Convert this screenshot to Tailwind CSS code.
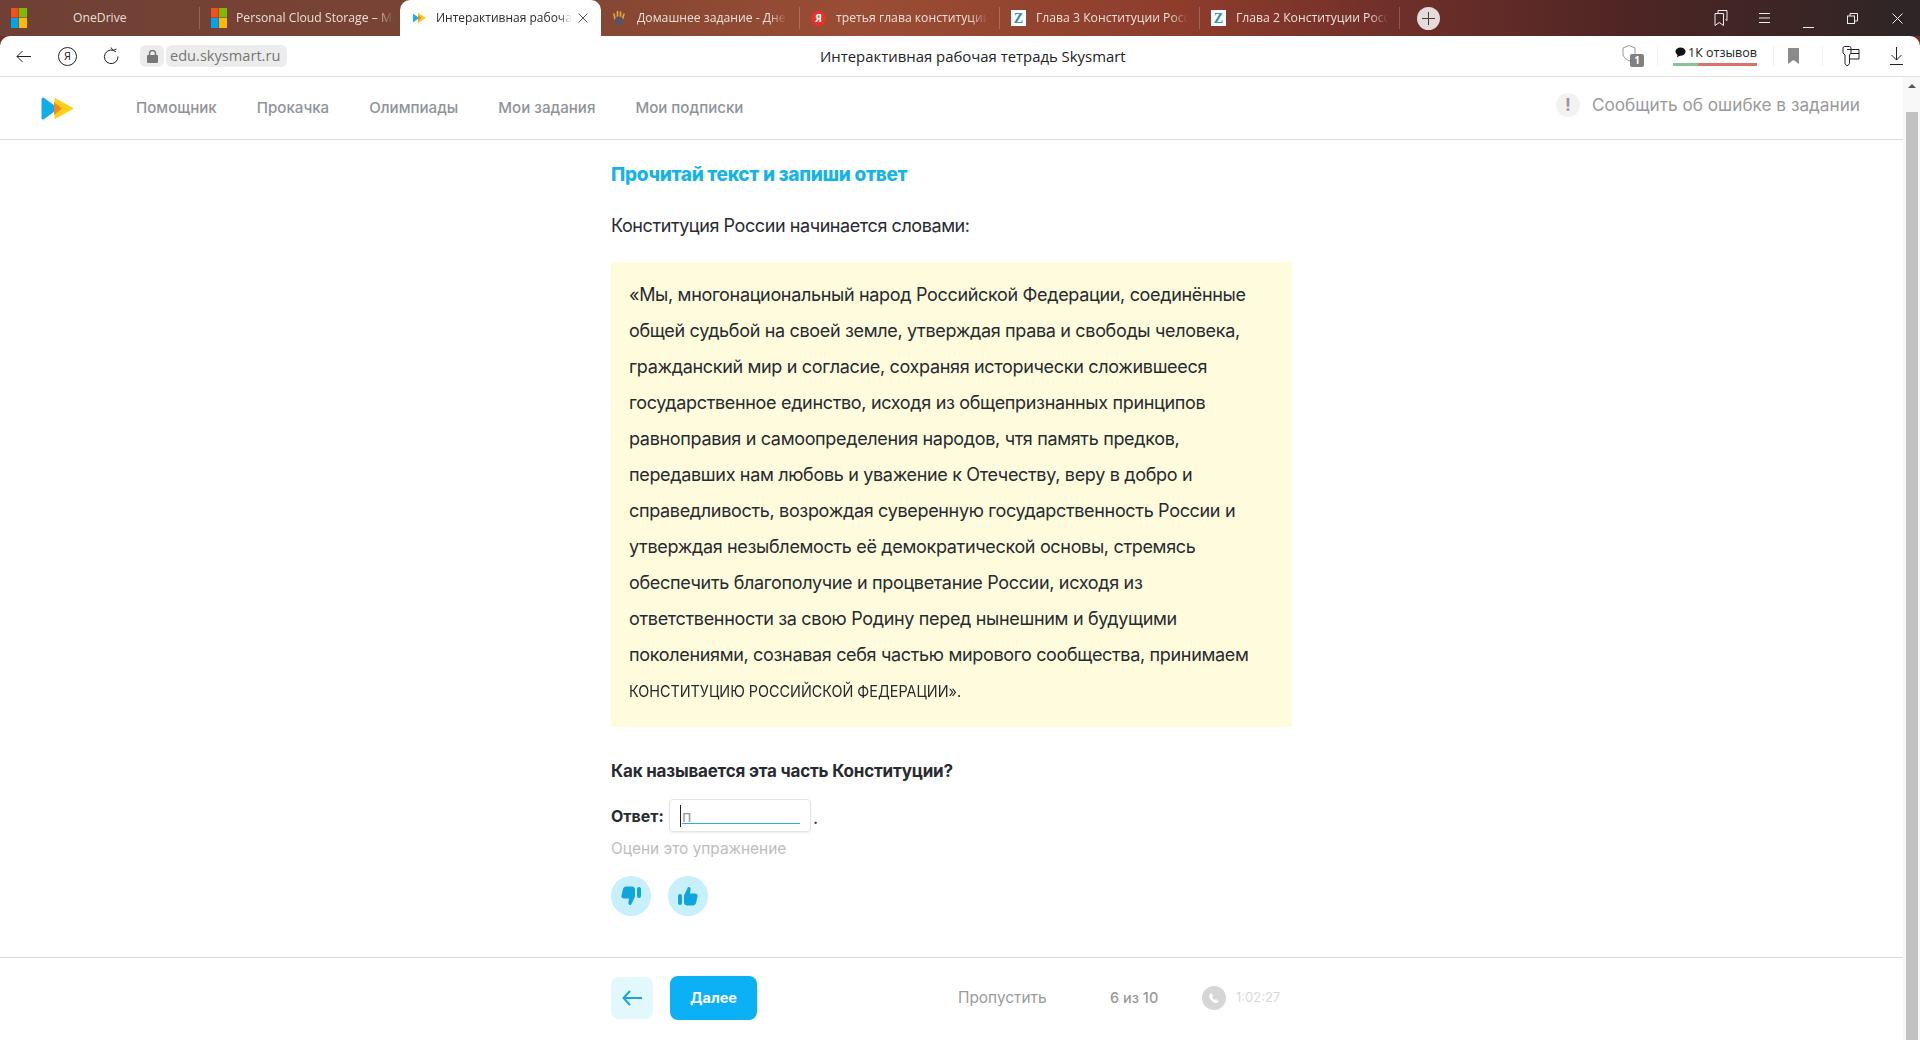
<!DOCTYPE html>
<html lang="ru">
<head>
  <meta charset="UTF-8" />
  <title>Интерактивная рабочая тетрадь Skysmart</title>
  <script src="https://cdn.jsdelivr.net/npm/@tailwindcss/browser@4"></script>
</head>
<body class="bg-white font-['Inter','Noto_Sans',sans-serif] text-[#272b30] h-[1040px] w-[1920px] overflow-hidden flex flex-col">

  <!-- Tab strip -->
  <div class="h-9 shrink-0 flex items-stretch font-['Open_Sans',sans-serif] text-[12.2px] text-[#eadfd9] bg-[linear-gradient(90deg,#6f4035_0%,#7b4434_25%,#9a4d34_45%,#8d3c2c_62%,#71302a_72%,#4e2524_85%,#2d2526_100%)]">
    <div class="w-[200px] flex items-center pl-[11px] border-r border-white/20 my-[7px]">
      <svg class="w-4 h-5" viewBox="0 0 16 20"><rect y="0" width="7.5" height="9.5" fill="#f25022"/><rect x="8" y="0" width="8" height="9.5" fill="#7fba00"/><rect y="10" width="7.5" height="10" fill="#00a4ef"/><rect x="8" y="10" width="8" height="10" fill="#ffb900"/></svg>
      <span class="ml-[46px]">OneDrive</span>
    </div>
    <div class="w-[200px] flex items-center pl-[11px] my-[7px]">
      <svg class="w-4 h-5 shrink-0" viewBox="0 0 16 20"><rect y="0" width="7.5" height="9.5" fill="#f25022"/><rect x="8" y="0" width="8" height="9.5" fill="#7fba00"/><rect y="10" width="7.5" height="10" fill="#00a4ef"/><rect x="8" y="10" width="8" height="10" fill="#ffb900"/></svg>
      <span class="ml-[9px] whitespace-nowrap overflow-hidden w-[158px] [mask-image:linear-gradient(90deg,#000_88%,transparent)]">Personal Cloud Storage – Microsoft</span>
    </div>
    <div class="w-[201px] flex items-center pl-[13px] bg-white text-[#2b2b2b] text-[12px] rounded-t-[10px] relative">
      <svg class="w-[14px] h-3 shrink-0" viewBox="0 0 14 12"><path d="M0 1.500 6 6 0 10.500Z" fill="#1eaee8"/><path d="M5 1 13 6 5 11Z" fill="#fdc91a"/><path d="M5 3 8.500 6 5 9Z" fill="#f58a20"/></svg>
      <span class="ml-[9px] whitespace-nowrap overflow-hidden w-[136px] [mask-image:linear-gradient(90deg,#000_90%,transparent)]">Интерактивная рабочая тетрадь</span>
      <svg class="w-[10px] h-[10px] ml-[6px]" viewBox="0 0 10 10" stroke="#555" fill="none"><path d="M.5.5l9 9M9.500.5l-9 9"/></svg>
    </div>
    <div class="w-[199px] flex items-center pl-[11px] border-r border-white/20 my-[7px]">
      <svg class="w-[14px] h-4 shrink-0" viewBox="0 0 14 16" fill="none"><path d="M3 9 2 4M5.500 8V1.500M8.500 8V2M10.500 9 12 4" stroke="#e0a63a" stroke-width="1.700" stroke-linecap="round"/><circle cx="7" cy="11" r="4.500" fill="#5d5263"/></svg>
      <span class="ml-[11px] whitespace-nowrap overflow-hidden w-[150px] [mask-image:linear-gradient(90deg,#000_88%,transparent)]">Домашнее задание - Дневник</span>
    </div>
    <div class="w-[200px] flex items-center pl-[11px] border-r border-white/20 my-[7px]">
      <span class="w-[15px] h-[15px] shrink-0 rounded-full bg-[#e8312a] text-white text-[10px] font-bold flex items-center justify-center">Я</span>
      <span class="ml-[10px] whitespace-nowrap overflow-hidden w-[152px] [mask-image:linear-gradient(90deg,#000_88%,transparent)]">третья глава конституции рф</span>
    </div>
    <div class="w-[200px] flex items-center pl-[11px] border-r border-white/20 my-[7px]">
      <span class="w-[15px] h-[16px] shrink-0 bg-white text-[#2b8fb5] text-[14px] font-bold flex items-center justify-center font-['Liberation_Serif',serif]">Z</span>
      <span class="ml-[10px] whitespace-nowrap overflow-hidden w-[152px] [mask-image:linear-gradient(90deg,#000_88%,transparent)]">Глава 3 Конституции России</span>
    </div>
    <div class="w-[200px] flex items-center pl-[11px] border-r border-white/20 my-[7px]">
      <span class="w-[15px] h-[16px] shrink-0 bg-white text-[#2b8fb5] text-[14px] font-bold flex items-center justify-center font-['Liberation_Serif',serif]">Z</span>
      <span class="ml-[10px] whitespace-nowrap overflow-hidden w-[152px] [mask-image:linear-gradient(90deg,#000_88%,transparent)]">Глава 2 Конституции России</span>
    </div>
    <div class="flex items-center pl-[17px]">
      <span class="w-[23px] h-[23px] rounded-full bg-[#e4dbda] flex items-center justify-center">
        <svg class="w-[13px] h-[13px]" viewBox="0 0 13 13" stroke="#4a3a38" fill="none"><path d="M6.500 0v13M0 6.500h13"/></svg>
      </span>
    </div>
    <div class="ml-auto flex items-center text-white">
      <svg class="w-[14px] h-4 mr-[30px]" viewBox="0 0 14 16" fill="none" stroke="#eee"><path d="M4 3V.5h9v10l-1.500-1"/><path d="M1 3.500h8.500v12L5.250 12.500 1 15.500Z"/></svg>
      <svg class="w-[13px] h-[10px] mr-[32px]" viewBox="0 0 13 10" stroke="#eee"><path d="M1 .5h11M1 5h11M1 9.500h11"/></svg>
      <svg class="w-[11px] h-[11px] mr-[33px] mt-[9px]" viewBox="0 0 11 11" stroke="#eee"><path d="M0 10.500h11"/></svg>
      <svg class="w-[11px] h-[11px] mr-[34px]" viewBox="0 0 11 11" stroke="#eee" fill="none"><rect x=".5" y="3" width="7" height="7.500"/><path d="M3 3V.5h7.500V8H8"/></svg>
      <svg class="w-[11px] h-[11px] mr-[17px]" viewBox="0 0 11 11" stroke="#eee" fill="none"><path d="M.5.5l10 10M10.500.5l-10 10"/></svg>
    </div>
  </div>

  <!-- Browser toolbar -->
  <div class="bg-[#6b2e28] shrink-0">
    <div class="h-[41px] bg-white rounded-t-[10px] border-b border-[#e3e3e3] flex items-center relative font-['Open_Sans',sans-serif]">
      <svg class="w-[15px] h-[13px] ml-[16px]" viewBox="0 0 15 13" fill="none" stroke="#222"><path d="M15 6.500H1M6.500 1 1 6.500 6.500 12"/></svg>
      <span class="w-[19px] h-[19px] ml-[27px] rounded-full border border-[#222] text-[11px] flex items-center justify-center text-[#222]">Я</span>
      <svg class="w-[16px] h-[18px] ml-[26px]" viewBox="0 0 16 18" fill="none" stroke="#222"><path d="M13 5a6.800 6.800 0 1 0 2 4.500"/><path d="M8 0.500 10 3.500 13.500 2"/></svg>
      <span class="w-6 h-[22px] ml-[21px] rounded-md bg-[#ececec] flex items-center justify-center">
        <svg class="w-[11px] h-[13px]" viewBox="0 0 11 13" fill="#777"><rect y="5" width="11" height="8" rx="1"/><path d="M2.500 5V3.500a3 3 0 0 1 6 0V5" fill="none" stroke="#777" stroke-width="1.500"/></svg>
      </span>
      <span class="ml-[2px] h-[22px] px-[4px] rounded-md bg-[#ececec] text-[14.600px] text-[#777] flex items-center w-[121px] whitespace-nowrap">edu.skysmart.ru</span>
      <span class="absolute left-[820px] text-[14.900px] text-[#222]">Интерактивная рабочая тетрадь Skysmart</span>
      <div class="ml-auto flex items-center">
        <div class="relative w-[22px] h-[22px] mr-[13px]">
          <svg class="w-[14px] h-[17px]" viewBox="0 0 14 17" fill="none" stroke="#999"><path d="M7 .5 13 3v6c0 3-3 5-6 7-3-2-6-4-6-7V3Z"/></svg>
          <span class="absolute right-0 bottom-0 w-[14px] h-[13px] rounded-[2px] bg-[#808080] text-white text-[10px] font-bold flex items-center justify-center">1</span>
        </div>
        <div class="w-px h-5 bg-[#eee] mr-[15px]"></div>
        <div class="w-[84px] mr-[16px] flex flex-col">
          <div class="flex items-center h-[15px] text-[12.500px] text-[#222] whitespace-nowrap pl-[2px]">
            <svg class="w-[13px] h-[13px] mr-[2px] -mt-[2px]" viewBox="0 0 12 12"><ellipse cx="6" cy="5" rx="5.500" ry="4.500" fill="#111"/><path d="M3 8 2 11.500 6 9Z" fill="#111"/></svg>
            1К отзывов
          </div>
          <div class="flex h-[3px] mt-[2px]"><span class="w-[25px] bg-[#86c39b]"></span><span class="flex-1 bg-[#d9736a]"></span></div>
        </div>
        <div class="w-px h-5 bg-[#eee] mr-[14px]"></div>
        <svg class="w-[11px] h-[16px] mr-[23px]" viewBox="0 0 11 16" fill="#8a8a8a"><path d="M0 0h11v16L5.500 12 0 16Z"/></svg>
        <div class="w-px h-5 bg-[#eee] mr-[19px]"></div>
        <svg class="w-[18px] h-[20px] mr-[30px]" viewBox="0 0 18 20" fill="none" stroke="#222"><path d="M1 1.500 2.500.5h5L9 1.500V7L7.500 9v8.500L6 19.500H4.500L3 17.500V9L1 7Z"/><path d="M5 3.500h12V13H8M9 7.500h8"/></svg>
        <svg class="w-[13px] h-[18px] mr-[17px]" viewBox="0 0 13 18" fill="none" stroke="#222"><path d="M6.500 0v13M1.500 8l5 5 5-5M0 17.500h13"/></svg>
      </div>
    </div>
  </div>

  <div class="flex-1 flex min-h-0">
    <div class="flex-1 flex flex-col min-w-0">

      <!-- Site nav -->
      <header class="h-[63px] shrink-0 border-b border-[#dcdcdc] flex items-center">
        <svg class="w-[33px] h-[23px] ml-[41px]" viewBox="0 0 33 23">
          <path d="M2 2 15 11.500 2 21Z" fill="#12ade9" stroke="#12ade9" stroke-width="3" stroke-linejoin="round"/>
          <path d="M14 1.500 32 11.500 14 21.500Z" fill="#fdd015" stroke="#fdd015" stroke-width="1" stroke-linejoin="round"/>
          <path d="M13 5 21 11.500 13 18Z" fill="#f5871f"/>
        </svg>
        <nav class="flex gap-[40px] ml-[62px] text-[15.100px] font-medium text-[#8e9499]">
          <a>Помощник</a><a>Прокачка</a><a>Олимпиады</a><a>Мои задания</a><a>Мои подписки</a>
        </nav>
        <div class="ml-auto mr-[43px] -mt-[6px] flex items-center text-[17.200px] text-[#9a9a9a]">
          <span class="w-6 h-6 rounded-full bg-[#f2f2f2] text-[#999] font-bold flex items-center justify-center mr-[12px]">!</span>
          Сообщить об ошибке в задании
        </div>
      </header>

      <!-- Exercise -->
      <main class="flex-1 pl-[611px] min-h-0">
        <div class="w-[681px]">
          <h2 class="mt-[20px] h-[30px] leading-[30px] text-[19px] font-extrabold tracking-[-0.3px] text-[#16b4e6]">Прочитай текст и запиши ответ</h2>
          <p class="mt-[21px] h-[30px] leading-[30px] text-[18px] tracking-[-0.42px]">Конституция России начинается словами:</p>
          <div class="mt-[21px] h-[465px] bg-[#fffcdd] pl-[18px] pt-[15px] text-[18px] leading-[36px] tracking-[-0.33px] whitespace-nowrap">
            «Мы, многонациональный народ Российской Федерации, соединённые<br>общей судьбой на своей земле, утверждая права и свободы человека,<br>гражданский мир и согласие, сохраняя исторически сложившееся<br>государственное единство, исходя из общепризнанных принципов<br>равноправия и самоопределения народов, чтя память предков,<br>передавших нам любовь и уважение к Отечеству, веру в добро и<br>справедливость, возрождая суверенную государственность России и<br>утверждая незыблемость её демократической основы, стремясь<br>обеспечить благополучие и процветание России, исходя из<br>ответственности за свою Родину перед нынешним и будущими<br>поколениями, сознавая себя частью мирового сообщества, принимаем<br><span class="inline-block origin-left scale-x-[0.9] text-[16px] tracking-normal">КОНСТИТУЦИЮ РОССИЙСКОЙ ФЕДЕРАЦИИ».</span>
          </div>
          <p class="mt-[29px] h-[30px] leading-[30px] text-[17px] tracking-[-0.2px] font-bold">Как называется эта часть Конституции?</p>
          <div class="mt-[13px] flex items-center h-[33px]">
            <span class="text-[16px] font-bold w-[52px]">Ответ:</span>
            <div class="ml-[6px] w-[142px] h-[33px] rounded-[4px] border border-[#e4e4e4] shadow-[0_1px_2px_rgba(0,0,0,0.08)] relative">
              <span class="absolute left-[10px] top-[5px] w-px h-[22px] bg-[#222]"></span>
              <span class="absolute left-[12px] top-[4px] text-[16px] text-[#9a9a9a]">п</span>
              <span class="absolute left-[12px] right-[10px] bottom-[7px] h-px bg-[#2fb3c9]"></span>
            </div>
            <span class="ml-[2px] mt-[3px] text-[18px]">.</span>
          </div>
          <p class="mt-[4px] h-[26px] leading-[26px] text-[15.400px] text-[#bdbdbd]">Оцени это упражнение</p>
          <div class="mt-[14px] flex gap-[17px]">
            <span class="w-10 h-10 rounded-full bg-[#c7f0fa] flex items-center justify-center">
              <svg class="w-[20px] h-[20px] rotate-180" viewBox="0 0 20 20" fill="#0fa5e0"><rect x="0" y="8" width="4" height="11" rx="2"/><path d="M6 9.500 10 1c2-.5 3 1 2.500 3L12 7.500h5c2 0 3 1.500 2.500 3L18 17c-.5 1.500-1.500 2.500-3 2.500H9c-2 0-3-1.500-3-3Z"/></svg>
            </span>
            <span class="w-10 h-10 rounded-full bg-[#c7f0fa] flex items-center justify-center">
              <svg class="w-[20px] h-[20px]" viewBox="0 0 20 20" fill="#0fa5e0"><rect x="0" y="8" width="4" height="11" rx="2"/><path d="M6 9.500 10 1c2-.5 3 1 2.500 3L12 7.500h5c2 0 3 1.500 2.500 3L18 17c-.5 1.500-1.500 2.500-3 2.500H9c-2 0-3-1.500-3-3Z"/></svg>
            </span>
          </div>
        </div>
      </main>

      <!-- Footer -->
      <footer class="h-[83px] shrink-0 border-t border-[#dcdcdc] pl-[611px] pb-[2px] flex items-center">
        <span class="w-[42px] h-[42px] rounded-[8px] bg-[#e2f8fd] flex items-center justify-center">
          <svg class="w-5 h-4" viewBox="0 0 20 16" fill="none" stroke="#17a6d8" stroke-width="2"><path d="M20 8H2M8 1 1.500 8 8 15"/></svg>
        </span>
        <span class="ml-[17px] w-[87px] h-[44px] rounded-[8px] bg-[#0bb0f5] text-white text-[14.500px] font-bold flex items-center justify-center">Далее</span>
        <span class="ml-[201px] w-[87px] text-[15.400px] text-[#9a9a9a] whitespace-nowrap">Пропустить</span>
        <span class="ml-[65px] w-[47px] text-[14.500px] font-medium text-[#999] whitespace-nowrap">6 из 10</span>
        <span class="ml-[45px] w-6 h-6 rounded-full bg-[#d6d6d6] flex items-center justify-center">
          <svg class="w-3 h-3" viewBox="0 0 12 12" fill="#fff"><path d="M3 1 5 4 4 5.500 6.500 8 8 7l3 2.500C9 12 6 11.500 3.500 8.500 1 6 .5 3 3 1Z"/></svg>
        </span>
        <span class="ml-[10px] text-[13px] text-[#d8d8d8]">1:02:27</span>
      </footer>
    </div>

    <!-- Scrollbar -->
    <div class="w-[17px] shrink-0 bg-[#f8f8f8] flex flex-col items-center">
      <span class="mt-[7px] w-0 h-0 border-x-[4px] border-x-transparent border-b-[4px] border-b-[#555]"></span>
      <span class="mt-[24px] w-[12px] flex-1 bg-[#c1c1c1]"></span>
    </div>
  </div>

</body>
</html>
